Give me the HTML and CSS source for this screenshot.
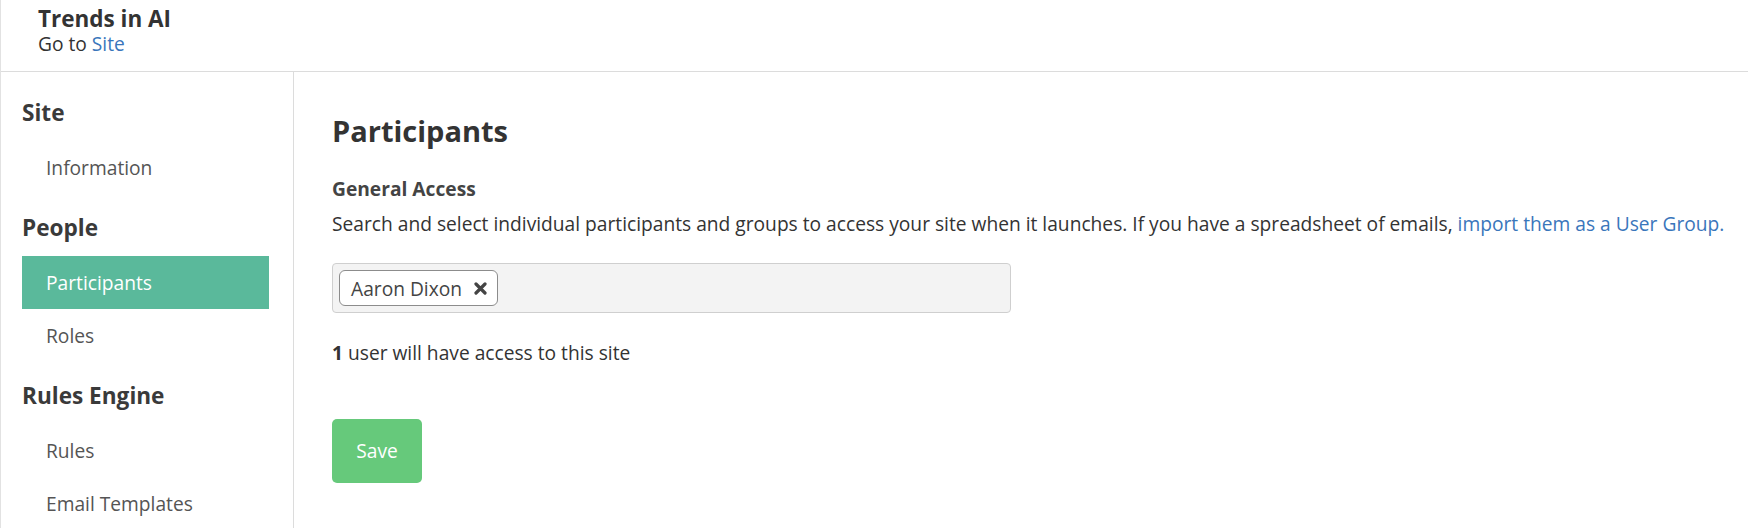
FILE: index.html
```html
<!DOCTYPE html>
<html lang="en">
<head>
    <meta charset="UTF-8">
    <meta name="viewport" content="width=device-width, initial-scale=1.0">
    <title>Participants - Trends in AI</title>
    <link rel="stylesheet" href="styles.css">
</head>
<body>
    <div class="page">
        <header class="topbar">
            <div class="site-name">Trends in AI</div>
            <div class="site-link">Go to <a href="#">Site</a></div>
        </header>

        <div class="layout">
            <nav class="sidebar">
                <div class="nav-heading">Site</div>
                <a class="nav-item" href="#">Information</a>

                <div class="nav-heading">People</div>
                <a class="nav-item active" href="#">Participants</a>
                <a class="nav-item" href="#">Roles</a>

                <div class="nav-heading">Rules Engine</div>
                <a class="nav-item" href="#">Rules</a>
                <a class="nav-item" href="#">Email Templates</a>
            </nav>

            <main class="content">
                <h1 class="page-title">Participants</h1>

                <div class="field-label">General Access</div>
                <p class="field-help">
                    Search and select individual participants and groups to access your site when it launches. If you have a spreadsheet of emails, <a href="#">import them as a User Group.</a>
                </p>

                <div class="picker">
                    <span class="chip">
                        Aaron Dixon
                        <svg class="chip-remove" width="13" height="13" viewBox="0 0 13 13">
                            <path d="M2 2 L11 11 M11 2 L2 11" stroke="#444" stroke-width="3.2" stroke-linecap="round"/>
                        </svg>
                    </span>
                </div>

                <p class="access-count"><b>1</b> user will have access to this site</p>

                <button class="save-btn">Save</button>
            </main>
        </div>
    </div>
</body>
</html>
```

FILE: styles.css
```css
body {
    margin: 0;
    font-family: 'Open Sans', 'Liberation Sans', sans-serif;
    font-size: 19.2px;
    color: #333;
    background-color: #fff;
}

a {
    color: #3a76bb;
    text-decoration: none;
}

.page {
    border-left: 1px solid #e2e2e2;
    min-height: 528px;
    box-sizing: border-box;
}

/* ヘッダー */
.topbar {
    height: 72px;
    box-sizing: border-box;
    padding: 5px 0 0 37px;
    border-bottom: 1px solid #dcdcdc;
}

.site-name {
    font-size: 22.5px;
    font-weight: bold;
    line-height: 28px;
    color: #333;
}

.site-link {
    font-size: 19.2px;
    line-height: 21px;
    color: #333;
}

.layout {
    display: flex;
}

/* サイドバー */
.sidebar {
    width: 293px;
    box-sizing: border-box;
    padding: 7px 24px 0 21px;
    border-right: 1px solid #dcdcdc;
    display: flex;
    flex-direction: column;
    min-height: 456px;
}

.nav-heading {
    font-size: 22.6px;
    font-weight: bold;
    line-height: 26px;
    padding: 21px 0 15px;
    color: #3a3a3a;
}

.nav-item {
    height: 53px;
    display: flex;
    align-items: center;
    padding-left: 24px;
    color: #555;
    font-size: 19.2px;
}

.nav-item.active {
    background-color: #5ab99b;
    color: #fff;
}

/* メイン */
.content {
    flex: 1;
    padding: 42px 0 0 38px;
}

.page-title {
    margin: 0;
    font-size: 29px;
    line-height: 33.6px;
    font-weight: bold;
    color: #333;
}

.field-label {
    margin-top: 28px;
    font-weight: bold;
    line-height: 26.4px;
    color: #444;
}

.field-help {
    margin: 9px 0 0;
    line-height: 26.4px;
}

.picker {
    margin-top: 26px;
    width: 679px;
    height: 50px;
    box-sizing: border-box;
    padding: 6px 6px;
    background-color: #f3f3f3;
    border: 1px solid #cfcfcf;
    border-radius: 4px;
}

.chip {
    display: inline-flex;
    align-items: center;
    gap: 12px;
    height: 36px;
    box-sizing: border-box;
    padding: 0 10px 0 11px;
    background-color: #fff;
    border: 1px solid #8c8c8c;
    border-radius: 6px;
    color: #444;
}

.access-count {
    margin: 27px 0 0;
    line-height: 26.4px;
}

.save-btn {
    margin-top: 52px;
    width: 90px;
    height: 64px;
    border: none;
    border-radius: 5px;
    background-color: #66c97b;
    color: #fff;
    font-family: inherit;
    font-size: 19.2px;
    cursor: pointer;
}
```
